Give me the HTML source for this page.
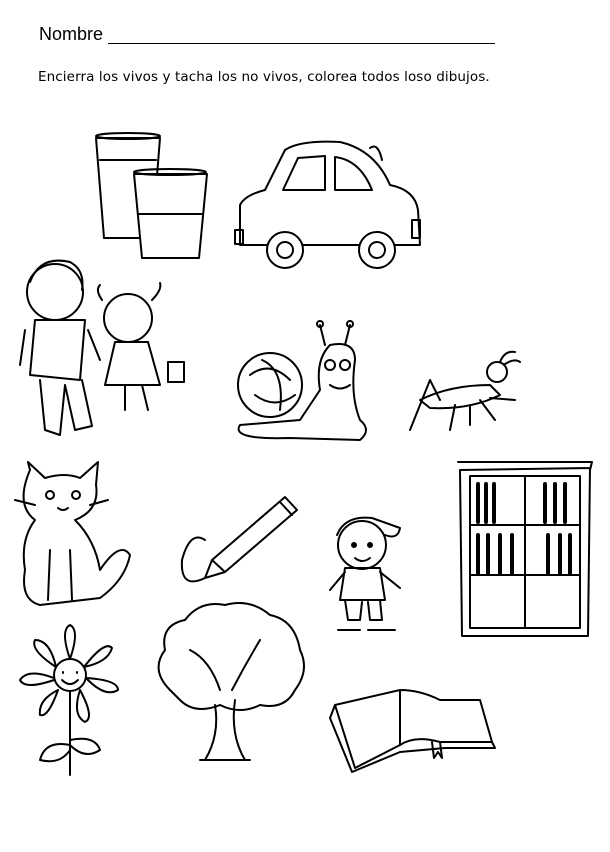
<!DOCTYPE html>
<html><head><meta charset="utf-8"><style>
body{margin:0;background:#fff;width:610px;height:852px;overflow:hidden;position:relative;font-family:"Liberation Sans",sans-serif}
.t1{position:absolute;left:39px;top:24px;font-size:18px;color:#000}
.line{position:absolute;left:108px;top:43px;width:387px;border-top:1.5px solid #000}
.t2{position:absolute;left:38px;top:69px;font-size:13.5px;color:#000;font-family:"Comic Sans MS","DejaVu Sans",sans-serif;letter-spacing:0.1px}
svg{position:absolute;left:0;top:0}
</style></head><body>
<div class="t1">Nombre</div><div class="line"></div>
<div class="t2">Encierra los vivos y tacha los no vivos, colorea todos loso dibujos.</div>
<svg width="610" height="852" fill="none" stroke="#000" stroke-width="2" stroke-linejoin="round" stroke-linecap="round">
<!-- glasses -->
<path d="M96 138 L160 138 L152 238 L104 238 Z"/><path d="M100 160 L156 160"/><ellipse cx="128" cy="136" rx="32" ry="3"/>
<path d="M134 174 L207 174 L199 258 L142 258 Z" fill="#fff"/><path d="M138 214 L203 214"/><ellipse cx="170" cy="172" rx="36" ry="3"/>
<!-- car -->
<path d="M240 205 Q245 195 265 190 L285 150 Q300 140 340 142 Q375 150 390 185 Q415 190 418 210 L420 245 L240 245 Z"/>
<path d="M283 190 L298 158 L325 156 L325 190 Z M335 190 L335 157 Q360 160 372 190 Z"/><path d="M370 148 Q378 142 382 160"/>
<circle cx="285" cy="250" r="18" fill="#fff"/><circle cx="285" cy="250" r="8"/><circle cx="377" cy="250" r="18" fill="#fff"/><circle cx="377" cy="250" r="8"/>
<rect x="235" y="230" width="8" height="14"/><rect x="412" y="220" width="8" height="18"/>
<!-- kids -->
<circle cx="55" cy="292" r="28"/><path d="M30 282 Q40 255 70 262 Q85 270 82 290"/><path d="M35 320 L30 375 L80 380 L85 320 Z"/><path d="M40 380 L45 430 L60 435 L65 385 M65 385 L75 430 L92 426 L82 380"/><path d="M25 330 L20 365 M88 330 L100 360"/>
<circle cx="128" cy="318" r="24"/><path d="M102 300 Q95 290 100 285 M152 300 Q162 290 160 283"/><path d="M115 342 L105 385 L160 385 L148 342 Z"/><path d="M125 385 L125 410 M142 385 L148 410"/><rect x="168" y="362" width="16" height="20"/>
<!-- snail -->
<circle cx="270" cy="385" r="32"/><path d="M250 375 Q270 360 290 380 M255 395 Q275 410 295 395 M262 360 Q285 370 280 410"/><path d="M240 425 Q230 440 290 438 L360 440 Q372 430 360 420 Q350 395 355 360 Q355 340 330 345 Q315 360 320 390 L300 420 Z"/><path d="M325 345 L320 325 M345 345 L350 325"/><circle cx="320" cy="324" r="3"/><circle cx="350" cy="324" r="3"/><circle cx="330" cy="365" r="5"/><circle cx="345" cy="365" r="5"/><path d="M330 385 Q340 392 350 385"/>
<!-- grasshopper -->
<path d="M420 400 Q450 385 490 385 L500 395 Q470 410 430 408 Z"/><circle cx="497" cy="372" r="10"/><path d="M500 362 Q505 350 515 352 M505 364 Q515 358 520 362"/><path d="M440 400 L430 380 L410 430 M455 405 L450 430 M480 400 L495 420 M490 398 L515 400 M470 405 L470 425"/>
<!-- cat -->
<path d="M30 470 L28 462 L45 478 Q65 472 80 478 L98 462 L96 485 Q100 510 75 520 Q95 540 100 570 Q120 540 130 555 Q125 580 100 598 L40 605 Q20 600 25 570 Q20 540 35 520 Q15 505 30 470 Z"/><circle cx="50" cy="495" r="4"/><circle cx="76" cy="495" r="4"/><path d="M58 508 Q63 512 68 508 M35 505 L15 500 M90 505 L108 500"/><path d="M50 550 L48 600 M70 550 L72 600"/>
<!-- pencil -->
<path d="M212 560 L285 497 L297 510 L225 572 Z M212 560 L205 578 L225 572 M280 502 L292 515"/><path d="M205 578 Q180 590 182 560 Q190 530 205 540"/>
<!-- boy -->
<circle cx="362" cy="545" r="24"/><path d="M337 535 Q345 515 372 518 L400 528 Q398 540 385 535"/><circle cx="354" cy="545" r="2" fill="#000"/><circle cx="370" cy="545" r="2" fill="#000"/><path d="M355 558 Q362 564 370 558"/><path d="M345 568 L340 600 L385 600 L380 568 Z M345 572 L330 590 M380 572 L400 588"/><path d="M345 600 L348 620 L360 620 L362 602 M368 602 L370 620 L382 620 L380 600 M338 630 L360 630 M368 630 L395 630"/>
<!-- bookshelf -->
<path d="M460 470 L590 468 L588 636 L462 636 Z M458 462 L592 462 L590 470 M470 476 L580 476 L580 628 L470 628 Z M525 476 L525 628 M470 525 L580 525 M470 575 L580 575"/>
<path d="M478 484 v38 M486 484 v38 M494 484 v38 M545 484 v38 M555 484 v38 M565 484 v38 M478 535 v38 M488 535 v38 M500 535 v38 M512 535 v38 M548 535 v38 M560 535 v38 M570 535 v38" stroke-width="4"/>
<!-- flower -->
<circle cx="70" cy="675" r="16"/><path d="M63 672 v1 M77 672 v1 M62 680 Q70 688 78 680"/>
<path d="M70 659 Q60 630 70 625 Q80 630 70 659 M84 667 Q105 640 112 648 Q108 662 84 667 M86 678 Q118 680 118 690 Q105 698 86 678 M80 690 Q95 718 85 722 Q72 715 80 690 M58 690 Q48 718 40 715 Q38 700 58 690 M54 680 Q25 690 20 680 Q28 668 54 678 M56 667 Q30 650 35 640 Q50 640 56 667"/>
<path d="M70 691 L70 775 M70 745 Q45 740 40 760 Q60 765 70 750 M70 740 Q95 735 100 750 Q85 760 70 745"/>
<!-- tree -->
<path d="M170 690 Q150 670 165 650 Q160 625 185 620 Q200 600 225 605 Q250 598 270 615 Q295 620 300 650 Q310 670 295 690 Q285 710 260 705 Q240 715 220 705 Q195 715 180 700 Z"/><path d="M215 705 Q220 735 205 760 L245 760 Q230 735 235 700 M200 760 L250 760"/><path d="M190 650 Q210 660 220 690 M260 640 Q245 665 232 690"/>
<!-- book -->
<path d="M335 705 L400 690 Q420 690 440 700 L480 700 L492 742 L440 742 Q415 735 400 745 L355 768 Z M400 690 L400 745 M335 705 L330 718 L352 772 L400 752 L445 748 L495 748 L492 742"/><path d="M432 742 L434 758 L438 752 L442 758 L440 742"/>
</svg>
</body></html>
